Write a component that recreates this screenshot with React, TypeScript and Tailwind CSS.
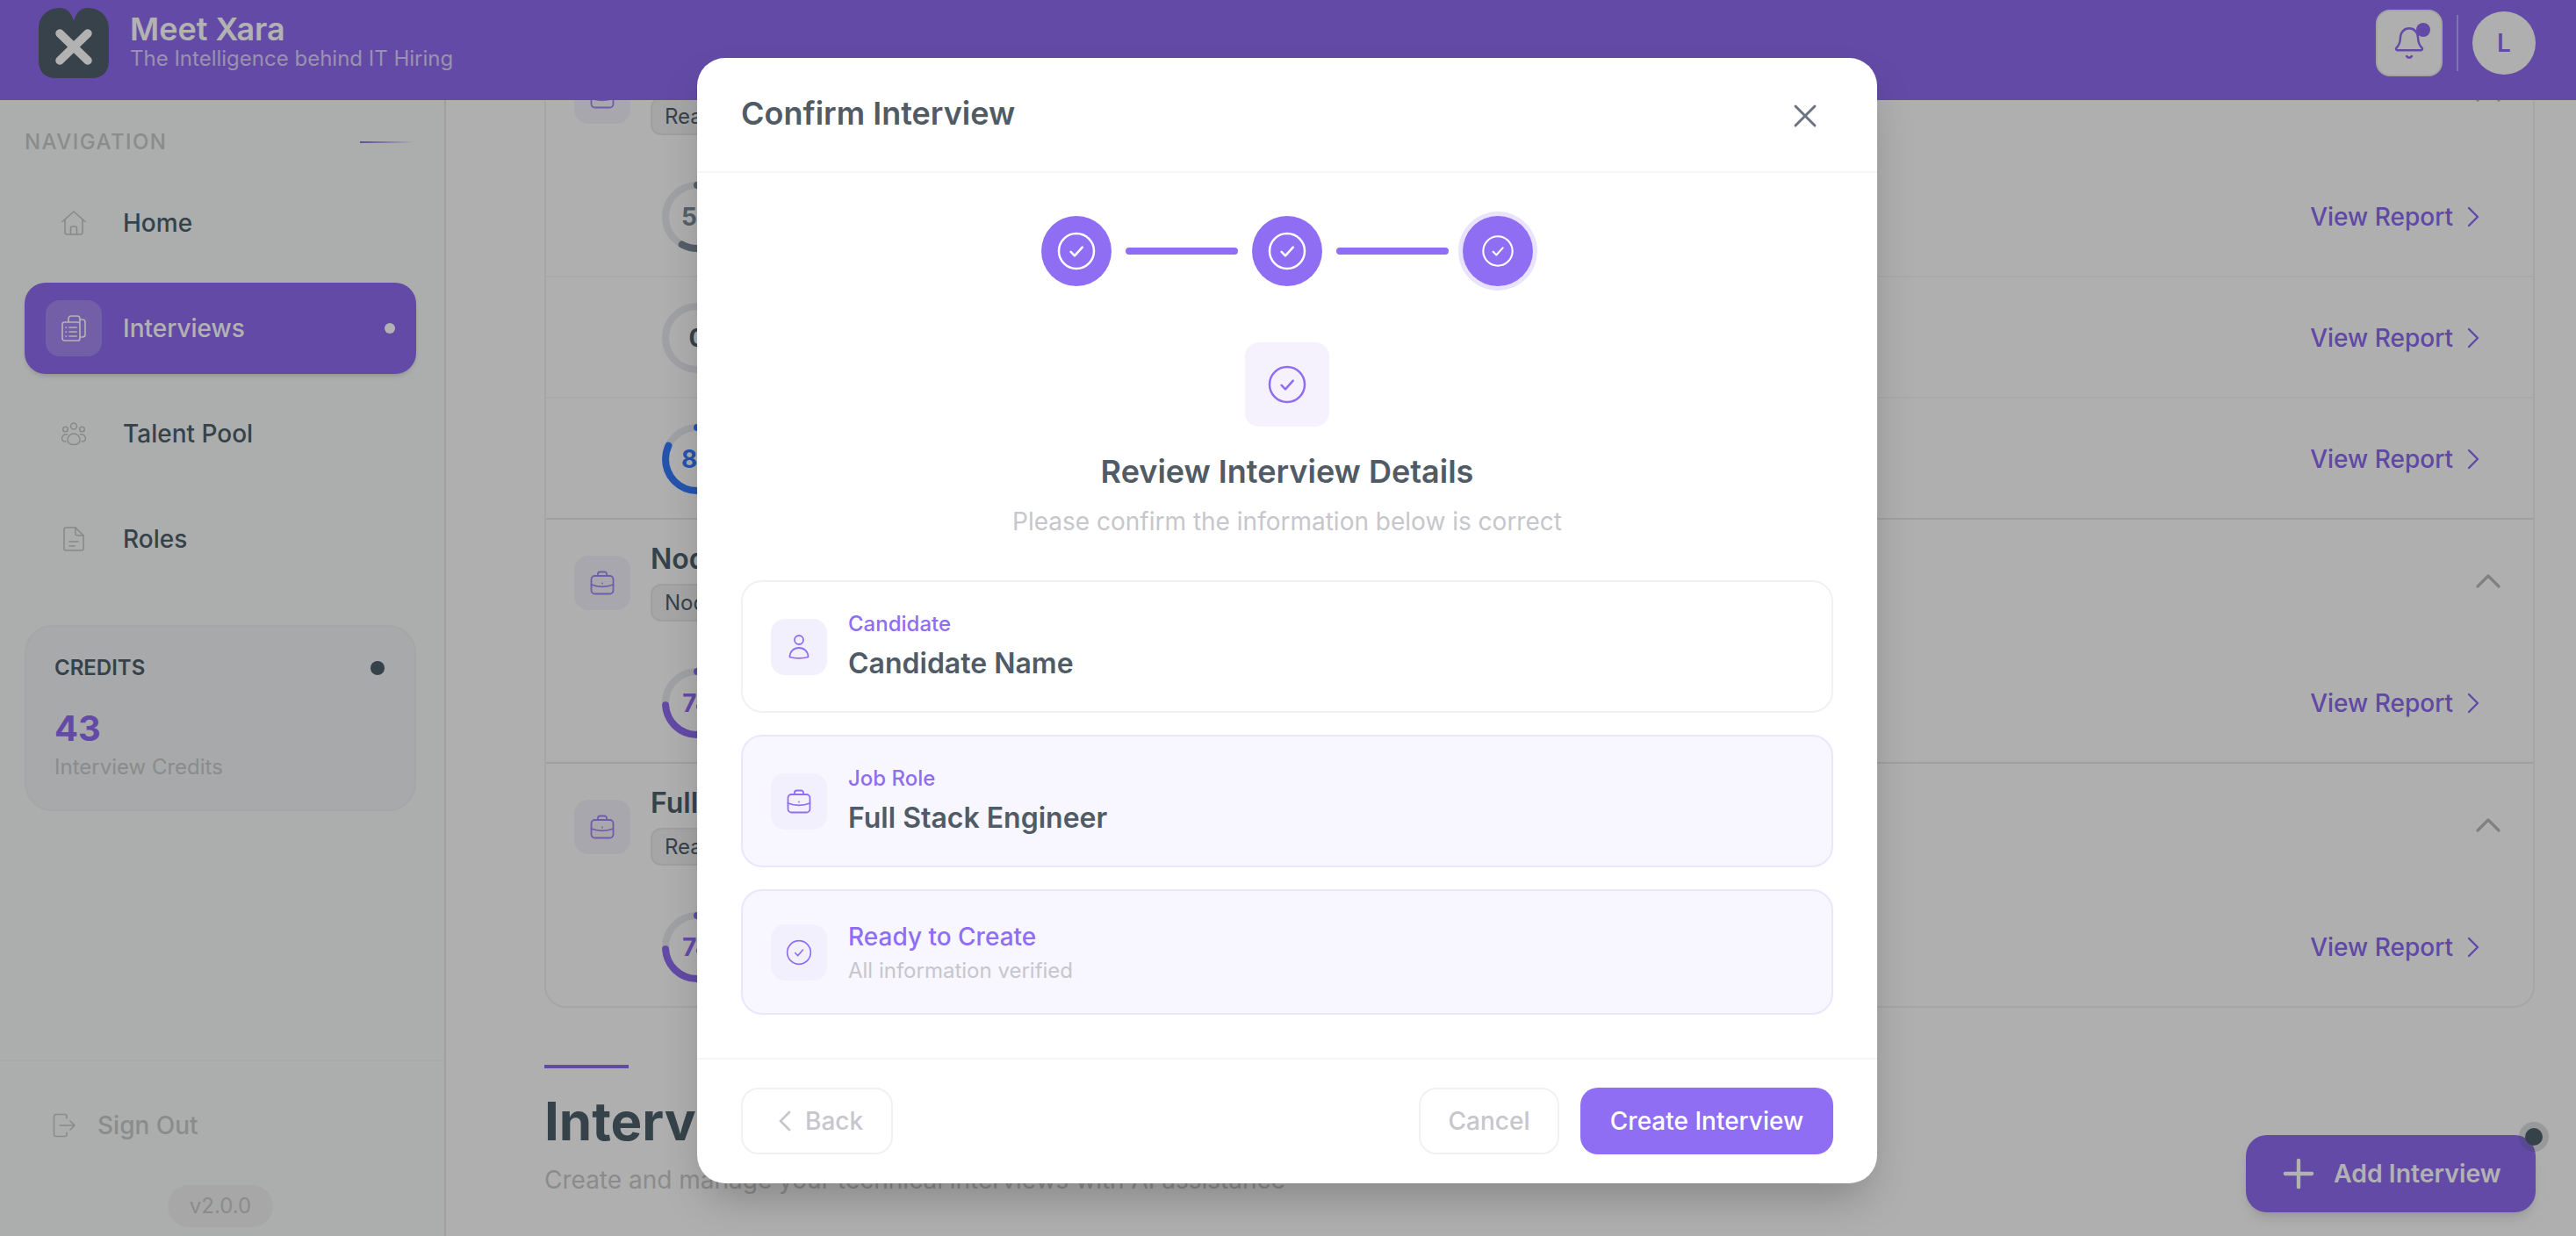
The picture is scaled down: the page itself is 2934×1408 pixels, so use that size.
import { Bell, ChevronLeft, ChevronRight, ChevronUp, Plus, X } from 'lucide-react';

// shared thin check-circle, sized by the caller
const CheckCircle = ({ size, className }: { size: number; className?: string }) => (
  <svg width={size} height={size} viewBox="0 0 24 24" fill="none" stroke="currentColor" strokeWidth={1.25} strokeLinecap="round" strokeLinejoin="round" className={className}>
    <circle cx="12" cy="12" r="10" />
    <path d="M8.8 12.4l2.2 2.3 4.4-4.9" />
  </svg>
);

const UserIcon = () => (
  <svg width="32" height="32" viewBox="0 0 32 32" fill="none" stroke="currentColor" strokeWidth={1.8} strokeLinejoin="round">
    <circle cx="16" cy="8" r="5" />
    <path d="M5.5 27.5c0-6.5 4.5-10.500 10.500-10.500s10.500 4 10.500 10.500c-6 1.500-15 1.500-21 0z" />
  </svg>
);

const BriefcaseIcon = () => (
  <svg width="32" height="32" viewBox="0 0 32 32" fill="none" stroke="currentColor" strokeWidth={1.8} strokeLinecap="round" strokeLinejoin="round">
    <rect x="3.500" y="8" width="25" height="20.500" rx="4" />
    <path d="M11 8V6a2.500 2.500 0 0 1 2.500-2.500h5A2.500 2.500 0 0 1 21 6v2" />
    <path d="M3.500 18c7.500 3 17.500 3 25 0" />
    <path d="M16 16.500v.1" />
  </svg>
);

const HomeIcon = () => (
  <svg width="30" height="30" viewBox="0 0 30 30" fill="none" stroke="currentColor" strokeWidth={1.6} strokeLinecap="round" strokeLinejoin="round">
    <path d="M2 13.500L15 2l13 11.500" />
    <path d="M5 11v14.500A2.500 2.500 0 0 0 7.500 28h15a2.500 2.500 0 0 0 2.500-2.500V11" />
    <path d="M11.500 28v-7a2 2 0 0 1 2-2h3a2 2 0 0 1 2 2v7" />
  </svg>
);

const ClipboardIcon = () => (
  <svg width="30" height="32" viewBox="0 0 30 32" fill="none" stroke="currentColor" strokeWidth={1.7} strokeLinecap="round" strokeLinejoin="round">
    <path d="M22 6h3a3 3 0 0 1 3 3v14a3 3 0 0 1-3 3h-2" />
    <path d="M9 9V5a3 3 0 0 1 3-3h7a3 3 0 0 1 3 3v4" />
    <rect x="2" y="9" width="20" height="21" rx="2.500" />
    <path d="M10 15h8M10 20h8M10 25h8M6 15h.5M6 20h.5M6 25h.5" />
  </svg>
);

const TeamIcon = () => (
  <svg width="30" height="28" viewBox="0 0 30 28" fill="none" stroke="currentColor" strokeWidth={1.5} strokeLinejoin="round">
    <circle cx="15" cy="5.500" r="3.500" />
    <circle cx="5.500" cy="9" r="2.800" />
    <circle cx="24.500" cy="9" r="2.800" />
    <path d="M8 21c0-4 3-7 7-7s7 3 7 7c0 3.500-3 5.500-7 5.500s-7-2-7-5.500z" />
    <path d="M8 15c-3.500-1-6.500 1-6.500 4.500 0 2 1.500 3.500 5 3.500M22 15c3.500-1 6.500 1 6.500 4.500 0 2-1.500 3.500-5 3.500" />
  </svg>
);

const FileIcon = () => (
  <svg width="26" height="30" viewBox="0 0 26 30" fill="none" stroke="currentColor" strokeWidth={1.6} strokeLinecap="round" strokeLinejoin="round">
    <path d="M15 2H4a2 2 0 0 0-2 2v22a2 2 0 0 0 2 2h18a2 2 0 0 0 2-2V11z" />
    <path d="M15 2v7a2 2 0 0 0 2 2h7" />
    <path d="M8 18h10M8 23h6" />
  </svg>
);

const SignOutIcon = () => (
  <svg width="26" height="28" viewBox="0 0 26 28" fill="none" stroke="currentColor" strokeWidth={1.6} strokeLinecap="round" strokeLinejoin="round">
    <path d="M16 6V3.500A2 2 0 0 0 14 1.500H3.500a2 2 0 0 0-2 2v21a2 2 0 0 0 2 2H14a2 2 0 0 0 2-2V22" />
    <path d="M8 14h16.500M20 9l5 5-5 5" />
  </svg>
);

const Logo = () => (
  <svg width="80" height="80" viewBox="0 0 80 80">
    <path d="M0 24C0 8 12 0 24 0c7 0 13 4 16 15C43 4 49 0 56 0c12 0 24 8 24 24v36c0 13-7 20-20 20H20C7 80 0 73 0 60z" fill="#4f5f6b" />
    <path d="M24 29l32 31M56 29L24 60" stroke="#ffffff" strokeWidth="9.5" strokeLinecap="round" />
  </svg>
);

const NavItem = ({ icon, label, active }: { icon: React.ReactNode; label: string; active?: boolean }) => (
  <div className={`flex h-[104px] items-center gap-[24px] rounded-[24px] pl-[24px] ${active ? 'bg-[#8e6bee] shadow-md' : ''}`}>
    <div className={`flex h-[64px] w-[64px] items-center justify-center rounded-[16px] ${active ? 'bg-white/20 text-white' : 'text-[#c2c4c4]'}`}>{icon}</div>
    <span className={`text-[28px] font-medium leading-[40px] ${active ? 'text-white' : 'text-[#4e5f6b]'}`}>{label}</span>
    {active && <span className="ml-auto mr-[24px] h-[12px] w-[12px] rounded-full bg-white" />}
  </div>
);

const Ring = ({ value, color }: { value: number; color: string }) => (
  <div className="relative h-[80px] w-[80px] shrink-0">
    <svg width="80" height="80" viewBox="0 0 80 80" className="-rotate-90">
      <circle cx="40" cy="40" r="36" fill="none" stroke="#e5e7eb" strokeWidth="8" />
      {value > 0 && (
        <circle cx="40" cy="40" r="36" fill="none" stroke={color} strokeWidth="8" strokeLinecap="round" pathLength={100} strokeDasharray={`${value} 100`} />
      )}
    </svg>
    <span className="absolute inset-0 flex items-center justify-center text-[28px] font-bold" style={{ color: value > 0 ? color : '#4e5f6b' }}>{value}</span>
  </div>
);

const ReportRow = ({ value, color, strong, last }: { value: number; color: string; strong?: boolean; last?: boolean }) => (
  <div className={`flex items-center pl-[132px] pr-[48px] pt-[2px] ${last ? 'h-[136px]' : `h-[138px] border-b-2 ${strong ? 'border-[#e6e6e8]' : 'border-[#f3f3f4]'}`}`}>
    <Ring value={value} color={color} />
    <span className="ml-auto flex items-center gap-[3px] text-[28px] font-medium text-[#8a67f0]">
      View Report
      <ChevronRight size={40} strokeWidth={1.4} />
    </span>
  </div>
);

const GroupHeader = ({ title, tag }: { title: string; tag: string }) => (
  <div className="flex h-[140px] items-start pl-[32px] pr-[27px] pt-[23px]">
    <div className="mt-[18px] flex h-[62px] w-[64px] items-center justify-center rounded-[16px] bg-[#f0eff8] text-[#a085f5]">
      <BriefcaseIcon />
    </div>
    <div className="ml-[23px] flex flex-col items-start">
      <span className="whitespace-nowrap text-[32px] font-semibold leading-[44px] text-[#4e5f6b]">{title}</span>
      <span className="mt-[6px] flex h-[43px] items-center whitespace-nowrap rounded-[12px] border-2 border-[#e4e4e6] bg-[#eeeeef] px-[14px] text-[24px] text-[#4e5f6b]">{tag}</span>
    </div>
    <ChevronUp size={48} strokeWidth={1.6} className="ml-auto mt-[23px] text-[#b8b8b8]" />
  </div>
);

const Step = ({ current }: { current?: boolean }) => (
  <div className={`flex h-[80px] w-[80px] items-center justify-center rounded-full bg-[#8f6ef3] text-white ${current ? 'ring-[5px] ring-[#e9e3fd]' : ''}`}>
    <CheckCircle size={current ? 40 : 48} />
  </div>
);

const Summary = ({ icon, tinted, children }: { icon: React.ReactNode; tinted?: boolean; children: React.ReactNode }) => (
  <div className={`flex items-center gap-[24px] rounded-[24px] border-2 px-[32px] py-[32px] ${tinted ? 'border-[#ebe6fd] bg-[#f8f6fe]' : 'border-[#f1f1f4] bg-white'}`}>
    <div className="flex h-[64px] w-[64px] shrink-0 items-center justify-center rounded-[16px] bg-[#f3f0fe] text-[#8f6ef3]">{icon}</div>
    <div className="flex flex-col">{children}</div>
  </div>
);

export default function App() {
  return (
    <div className="relative flex h-screen w-full flex-col overflow-hidden bg-[#fbfbfb] font-[Inter,sans-serif]">
      {/* top bar */}
      <header className="relative z-10 flex h-[114px] shrink-0 items-center bg-[#8e6bee] pb-[16px] pl-[44px] pr-[46px]">
        <Logo />
        <div className="mb-[4px] ml-[24px] flex flex-col">
          <span className="text-[36px] font-semibold leading-[40px] text-white">Meet Xara</span>
          <span className="text-[24px] leading-[28px] text-white/70">The Intelligence behind IT Hiring</span>
        </div>
        <div className="ml-auto flex items-center gap-[16px]">
          <div className="relative flex h-[76px] w-[76px] items-center justify-center rounded-[16px] border-2 border-[#ebebeb] bg-[#fbfbfb] text-[#8e6bee]">
            <Bell size={40} strokeWidth={1.5} />
            <span className="absolute right-[12px] top-[13px] h-[16px] w-[16px] rounded-full bg-[#8e6bee]" />
          </div>
          <div className="h-[64px] w-[2px] bg-white/40" />
          <div className="flex h-[72px] w-[72px] items-center justify-center rounded-full bg-[#fbfbfb] text-[28px] font-semibold text-[#8e6bee]">L</div>
        </div>
      </header>

      <div className="flex min-h-0 flex-1">
        {/* sidebar */}
        <aside className="flex w-[508px] shrink-0 flex-col border-r-2 border-[#e5e5e5] bg-[#f7faf9]">
          <div className="flex flex-col pl-[28px] pr-[32px] pt-[32px]">
            <div className="flex h-[32px] items-center justify-between pr-[2px]">
              <span className="text-[24px] font-medium tracking-[0.06em] text-[#c6c9c9]">NAVIGATION</span>
              <span className="h-[2px] w-[62px] bg-gradient-to-r from-[#8e6bee] to-transparent" />
            </div>
            <nav className="mt-[24px] flex flex-col gap-[16px]">
              <NavItem icon={<HomeIcon />} label="Home" />
              <NavItem icon={<ClipboardIcon />} label="Interviews" active />
              <NavItem icon={<TeamIcon />} label="Talent Pool" />
              <NavItem icon={<FileIcon />} label="Roles" />
            </nav>
            <div className="mt-[46px] flex flex-col rounded-[32px] border-2 border-[#eceef0] bg-[#f1f2f4] px-[32px] pb-[32px] pt-[31px]">
              <div className="flex h-[32px] items-center justify-between">
                <span className="text-[24px] font-semibold text-[#4e5f6b]">CREDITS</span>
                <span className="mr-[2px] h-[16px] w-[16px] rounded-full bg-[#4e5f6b]" />
              </div>
              <span className="mt-[29px] text-[40px] font-bold leading-[48px] text-[#8e6bee]">43</span>
              <span className="mt-[4px] text-[24px] leading-[32px] text-[#c6c9c9]">Interview Credits</span>
            </div>
          </div>
          <div className="mt-auto flex flex-col border-t-2 border-[#f0f1f1]">
            <div className="mt-[45px] flex h-[56px] items-center gap-[25px] pl-[60px] text-[#c6c9c9]">
              <SignOutIcon />
              <span className="text-[28px] font-medium">Sign Out</span>
            </div>
            <span className="mb-[10px] ml-[191px] mt-[40px] flex h-[48px] w-[120px] items-center justify-center rounded-full bg-[#eff0f1] text-[24px] text-[#c6c9c9]">v2.0.0</span>
          </div>
        </aside>

        {/* interviews list, scrolled down under the top bar */}
        <main className="min-w-0 flex-1 pl-[112px] pr-[47px]">
          <div className="-mt-[78px] rounded-[24px] border-2 border-[#eeeeef] bg-[#fbfbfb]">
            <GroupHeader title="React Developer" tag="React" />
            <ReportRow value={58} color="#7a8999" />
            <ReportRow value={0} color="#7a8999" />
            <ReportRow value={82} color="#3479fb" strong />
            <GroupHeader title="Node.js Developer" tag="Node.js" />
            <ReportRow value={74} color="#8e6bee" strong />
            <GroupHeader title="Full Stack Engineer" tag="React" />
            <ReportRow value={74} color="#8e6bee" last />
          </div>
          <div className="mt-[65px] h-[4px] w-[96px] bg-[#8e6bee]" />
          <h1 className="mt-[24px] text-[60px] font-bold leading-[72px] text-[#4e5f6b]">Interviews</h1>
          <p className="mt-[11px] text-[28px] leading-[40px] text-[#c6c9c9]">Create and manage your technical interviews with AI assistance</p>
        </main>
      </div>

      {/* floating action */}
      <button className="absolute bottom-[27px] right-[46px] flex h-[88px] w-[330px] items-center gap-[14px] rounded-[24px] bg-[#8e6bee] pl-[34px] text-[28.4px] font-semibold text-white shadow-lg">
        <Plus size={52} strokeWidth={2} />
        Add Interview
        <span className="absolute -right-[15px] -top-[15px] flex h-[34px] w-[34px] items-center justify-center rounded-full bg-[#4e5f6b]/20">
          <span className="h-[20px] w-[20px] rounded-full bg-[#4e5f6b]" />
        </span>
      </button>

      {/* modal */}
      <div className="absolute inset-0 z-20 flex justify-center bg-black/30 pr-[2px] pt-[66px]">
        <div className="h-[1282px] w-[1344px] overflow-hidden rounded-[32px] bg-white shadow-2xl">
          <div className="flex h-[131px] items-start justify-between border-b-2 border-[#f6f6f7] pl-[50px] pr-[60px] pt-[41px]">
            <span className="text-[36px] font-semibold leading-[44px] text-[#505b66]">Confirm Interview</span>
            <X size={44} strokeWidth={1.6} className="mt-[3px] text-[#6b7280]" />
          </div>

          <div className="flex flex-col items-center px-[50px] pb-[49px] pt-[49px]">
            <div className="flex items-center gap-[16px]">
              <Step />
              <span className="h-[8px] w-[128px] rounded-full bg-[#8f6ef3]" />
              <Step />
              <span className="h-[8px] w-[128px] rounded-full bg-[#8f6ef3]" />
              <Step current />
            </div>
            <div className="mt-[64px] flex h-[96px] w-[96px] items-center justify-center rounded-[16px] bg-[#f5f2fe] text-[#8f6ef3]">
              <CheckCircle size={48} />
            </div>
            <h2 className="mt-[29px] text-[36px] font-semibold leading-[44px] text-[#505b66]">Review Interview Details</h2>
            <p className="mt-[15px] text-[28px] leading-[40px] text-[#c6c6cc]">Please confirm the information below is correct</p>

            <div className="mt-[47px] flex w-full flex-col gap-[25px]">
              <Summary icon={<UserIcon />}>
                <span className="text-[24px] font-medium leading-[32px] text-[#8f6ef3]">Candidate</span>
                <span className="mt-[6px] text-[32px] font-semibold leading-[45px] text-[#505b66]">Candidate Name</span>
              </Summary>
              <Summary icon={<BriefcaseIcon />} tinted>
                <span className="text-[24px] font-medium leading-[32px] text-[#8f6ef3]">Job Role</span>
                <span className="mt-[6px] text-[32px] font-semibold leading-[45px] text-[#505b66]">Full Stack Engineer</span>
              </Summary>
              <Summary icon={<CheckCircle size={32} />} tinted>
                <span className="text-[28px] font-medium leading-[40px] text-[#8f6ef3]">Ready to Create</span>
                <span className="mt-[3px] text-[24px] leading-[32px] text-[#c6c6cc]">All information verified</span>
              </Summary>
            </div>
          </div>

          <div className="flex items-center border-t-2 border-[#f6f6f7] px-[50px] py-[32px]">
            <button className="flex h-[76px] items-center gap-[3px] rounded-[20px] border-2 border-[#f1f1f4] pl-[28px] pr-[32px] text-[28px] font-medium text-[#c6c6cc]">
              <ChevronLeft size={40} strokeWidth={1.6} />
              Back
            </button>
            <button className="ml-auto h-[76px] w-[160px] rounded-[20px] border-2 border-[#f1f1f4] text-[28px] font-medium text-[#c6c6cc]">Cancel</button>
            <button className="ml-[24px] h-[76px] w-[288px] rounded-[20px] bg-[#8f6ef3] text-[28px] font-medium text-white">Create Interview</button>
          </div>
        </div>
      </div>
    </div>
  );
}
